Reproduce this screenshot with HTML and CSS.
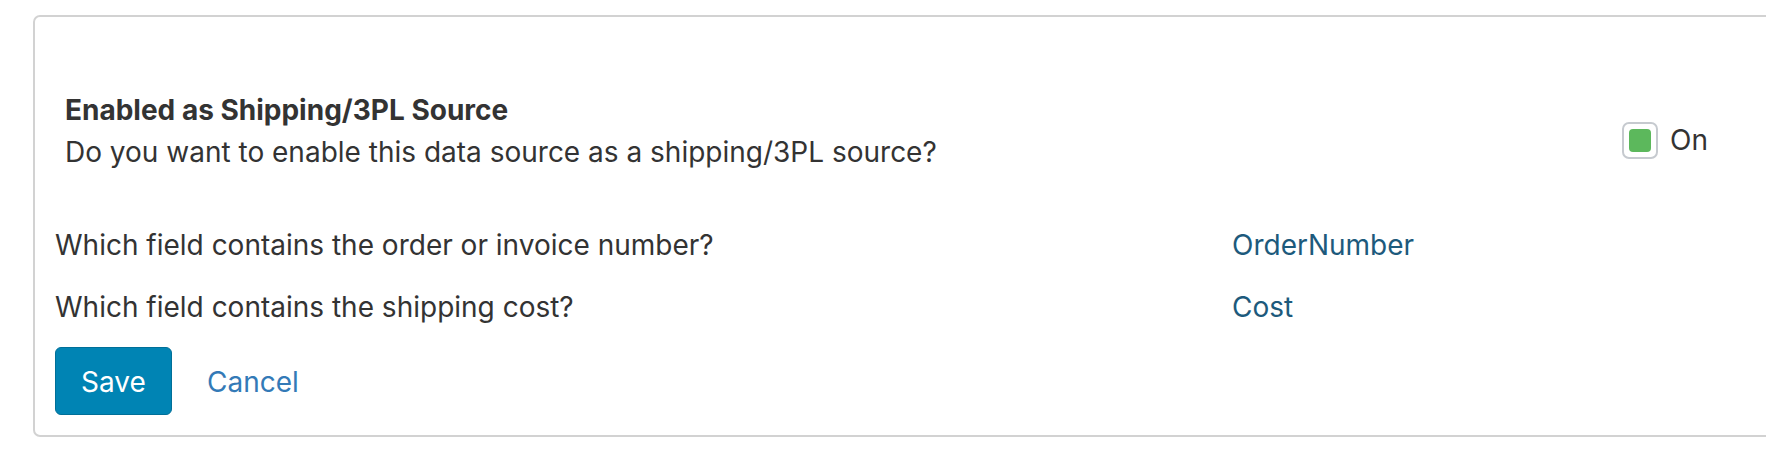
FILE: index.html
```html
<!DOCTYPE html>
<html lang="en">
<head>
<meta charset="utf-8">
<title>Shipping source</title>
<link rel="stylesheet" href="styles.css">
</head>
<body>
  <div class="card">
    <div class="section">
      <div class="section-text">
        <div class="title">Enabled as Shipping/3PL Source</div>
        <div class="desc">Do you want to enable this data source as a shipping/3PL source?</div>
      </div>
      <label class="toggle">
        <span class="box"><span class="fill"></span></span>
        <span class="toggle-label">On</span>
      </label>
    </div>
    <div class="field-row">
      <div class="label">Which field contains the order or invoice number?</div>
      <div class="value">OrderNumber</div>
    </div>
    <div class="field-row">
      <div class="label">Which field contains the shipping cost?</div>
      <div class="value">Cost</div>
    </div>
    <div class="actions">
      <button class="btn-save" type="button">Save</button>
      <a class="cancel" href="#">Cancel</a>
    </div>
  </div>
</body>
</html>
```
FILE: styles.css
```css
html, body {
  margin: 0;
  padding: 0;
  background: #ffffff;
  overflow: hidden;
}
body {
  font-family: Inter, "Noto Sans", "Liberation Sans", sans-serif;
  color: #333333;
  padding: 15px 0 0 33px;
}
.card {
  width: 1800px;
  box-sizing: border-box;
  border: 2px solid #d2d2d2;
  border-radius: 7px;
  padding: 76px 0 20px 20px;
}
.section {
  display: grid;
  grid-template-columns: 1557px auto;
  align-items: start;
  padding-left: 10px;
  margin-bottom: 45px;
}
.title {
  font-size: 28px;
  font-weight: 700;
  line-height: 34px;
  color: #333333;
}
.desc {
  font-size: 28px;
  line-height: 34px;
  margin-top: 8px;
}
.toggle {
  display: flex;
  align-items: center;
  gap: 12px;
  margin-top: 29px;
}
.box {
  width: 36px;
  height: 37px;
  box-sizing: border-box;
  border: 2px solid #c6cacf;
  border-radius: 7px;
  display: flex;
  align-items: center;
  justify-content: center;
}
.fill {
  width: 22px;
  height: 23px;
  background: #5cb85c;
  border-radius: 4px;
}
.toggle-label {
  font-size: 28px;
  line-height: 37px;
  color: #333333;
}
.field-row {
  display: grid;
  grid-template-columns: 1177px auto;
  padding: 11px 0;
  font-size: 28px;
  line-height: 40px;
}
.value {
  color: #1d5a7c;
}
.actions {
  display: flex;
  align-items: baseline;
  gap: 35px;
  margin-top: 9px;
}
.btn-save {
  font-family: inherit;
  font-size: 28px;
  line-height: 64px;
  height: 68px;
  width: 117px;
  padding: 2px 0 0;
  box-sizing: border-box;
  color: #ffffff;
  background: #0084b4;
  border: 1px solid #006f98;
  border-radius: 6px;
}
.cancel {
  font-size: 28px;
  color: #337ab7;
  text-decoration: none;
}
```
